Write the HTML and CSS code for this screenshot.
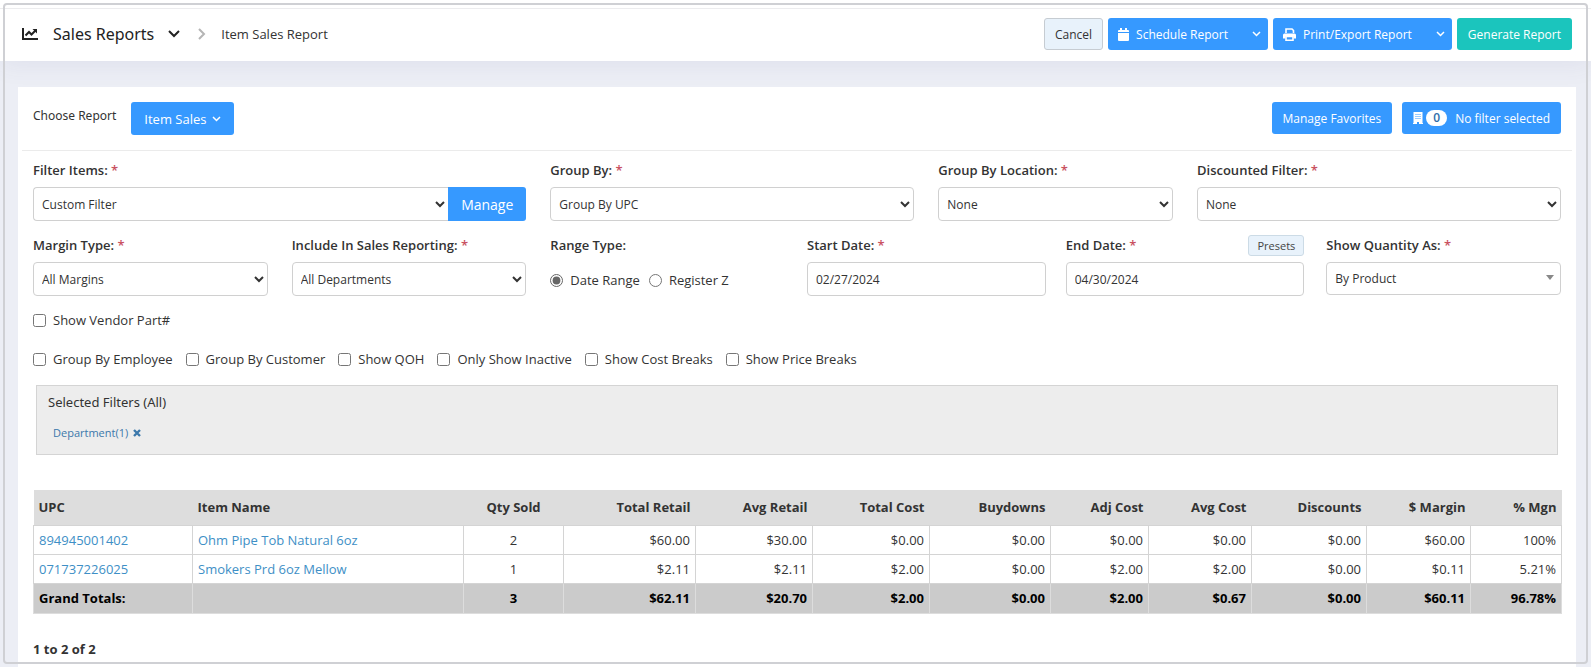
FILE: index.html
```html
<!DOCTYPE html>
<html lang="en">
<head>
    <meta charset="utf-8">
    <title>Item Sales Report</title>
    <link rel="stylesheet" href="styles.css">
</head>
<body>
  <header class="topbar">
      <svg class="icon-chart" viewBox="0 0 16 12" width="16" height="12">
        <path d="M1 0v11h15" fill="none" stroke="#222" stroke-width="2"/>
        <path d="M3.500 7.500L7 4l2.500 2.500L13.500 2.500" fill="none" stroke="#222" stroke-width="2"/>
        <path d="M10.500 1H15v4.500z" fill="#222"/>
      </svg>
      <h1 class="title">Sales Reports</h1>
      <svg class="icon-down" viewBox="0 0 12 8" width="12" height="8">
        <path d="M1 1l5 5 5-5" fill="none" stroke="#222" stroke-width="2"/>
      </svg>
      <svg class="icon-right" viewBox="0 0 8 12" width="8" height="12">
        <path d="M1 1l5 5-5 5" fill="none" stroke="#b5b5b5" stroke-width="2"/>
      </svg>
      <span class="crumb">Item Sales Report</span>
      <div class="actions">
        <button class="btn btn-light">Cancel</button>
        <div class="btn-group">
          <button class="btn">
            <svg viewBox="0 0 11 13" width="11" height="13">
              <path d="M2 0h2v2h3V0h2v2h1a1 1 0 0 1 1 1v1H0V3a1 1 0 0 1 1-1h1zM0 5h11v7a1 1 0 0 1-1 1H1a1 1 0 0 1-1-1z" fill="#fff"/>
            </svg>
            Schedule Report
          </button>
          <button class="btn btn-caret" aria-label="Schedule options">
            <svg viewBox="0 0 9 6" width="9" height="6"><path d="M1 1l3.500 3.500L8 1" fill="none" stroke="#fff" stroke-width="1.500"/></svg>
          </button>
        </div>
        <div class="btn-group">
          <button class="btn">
            <svg viewBox="0 0 13 13" width="13" height="13">
              <path d="M3 5V1h6l1.500 1.500V5" fill="none" stroke="#fff" stroke-width="1.600"/>
              <path d="M1.500 5.500h10A1.500 1.500 0 0 1 13 7v3.500h-2.500V8.500h-8v2H0V7a1.500 1.500 0 0 1 1.500-1.500z" fill="#fff"/>
              <path d="M3 8.500h7v3.700H3z" fill="none" stroke="#fff" stroke-width="1.600"/>
            </svg>
            Print/Export Report
          </button>
          <button class="btn btn-caret" aria-label="Export options">
            <svg viewBox="0 0 9 6" width="9" height="6"><path d="M1 1l3.500 3.500L8 1" fill="none" stroke="#fff" stroke-width="1.500"/></svg>
          </button>
        </div>
        <button class="btn btn-green">Generate Report</button>
      </div>
  </header>

  <main class="card">
    <div class="choose">
      <span class="choose-label">Choose Report</span>
      <button class="btn btn-report">Item Sales
        <svg viewBox="0 0 9 6" width="9" height="6"><path d="M1 1l3.500 3.500L8 1" fill="none" stroke="#fff" stroke-width="1.500"/></svg>
      </button>
      <div class="choose-right">
        <button class="btn">Manage Favorites</button>
        <button class="btn btn-filter">
          <svg viewBox="0 0 10 12" width="10" height="12">
            <path d="M.5 0h9v11h.5v1H6v-2H4v2H0v-1h.5z" fill="#fff"/>
            <path d="M2.500 2.500h1M4.500 2.500h1M6.500 2.500h1M2.500 4.500h1M4.500 4.500h1M6.500 4.500h1M2.500 6.500h1M4.500 6.500h1M6.500 6.500h1" stroke="#3699ff"/>
          </svg>
          <span class="count">0</span>
          No filter selected
        </button>
      </div>
    </div>

    <div class="filters">
      <div class="field span4">
        <label for="filter-items">Filter Items: <i>*</i></label>
        <div class="input-group">
          <select id="filter-items"><option>Custom Filter</option></select>
          <button class="btn btn-manage">Manage</button>
        </div>
      </div>
      <div class="field span3">
        <label for="group-by">Group By: <i>*</i></label>
        <select id="group-by"><option>Group By UPC</option></select>
      </div>
      <div class="field span2">
        <label for="group-location">Group By Location: <i>*</i></label>
        <select id="group-location"><option>None</option></select>
      </div>
      <div class="field span3">
        <label for="discounted">Discounted Filter: <i>*</i></label>
        <select id="discounted"><option>None</option></select>
      </div>

      <div class="field span2">
        <label for="margin-type">Margin Type: <i>*</i></label>
        <select id="margin-type"><option>All Margins</option></select>
      </div>
      <div class="field span2">
        <label for="include">Include In Sales Reporting: <i>*</i></label>
        <select id="include"><option>All Departments</option></select>
      </div>
      <div class="field span2">
        <span class="label">Range Type:</span>
        <div class="radios">
          <label class="check"><input type="radio" name="range" checked>Date Range</label>
          <label class="check"><input type="radio" name="range">Register Z</label>
        </div>
      </div>
      <div class="dates span4">
        <div class="field">
          <label for="start-date">Start Date: <i>*</i></label>
          <input id="start-date" type="text" value="02/27/2024">
        </div>
        <div class="field">
          <div class="label-row">
            <label for="end-date">End Date: <i>*</i></label>
            <button class="btn-presets">Presets</button>
          </div>
          <input id="end-date" type="text" value="04/30/2024">
        </div>
      </div>
      <div class="field span2">
        <label for="quantity">Show Quantity As: <i>*</i></label>
        <div class="quantity">
          <select id="quantity"><option>By Product</option></select>
        </div>
      </div>
    </div>

    <div class="checks">
      <label class="check"><input type="checkbox">Show Vendor Part#</label>
    </div>
    <div class="checks">
      <label class="check"><input type="checkbox">Group By Employee</label>
      <label class="check"><input type="checkbox">Group By Customer</label>
      <label class="check"><input type="checkbox">Show QOH</label>
      <label class="check"><input type="checkbox">Only Show Inactive</label>
      <label class="check"><input type="checkbox">Show Cost Breaks</label>
      <label class="check"><input type="checkbox">Show Price Breaks</label>
    </div>

    <div class="selected">
      <div class="selected-title">Selected Filters (All)</div>
      <a class="tag" href="#">Department(1)
        <svg viewBox="0 0 8 8" width="8" height="8"><path d="M1 1l6 6M7 1L1 7" stroke="#3c78ab" stroke-width="2.400"/></svg>
      </a>
    </div>

    <table class="report">
      <colgroup>
        <col class="w-upc"><col class="w-name"><col class="w-qty"><col class="w-retail"><col class="w-avg"><col class="w-cost">
        <col class="w-buy"><col class="w-adj"><col class="w-avgcost"><col class="w-disc"><col class="w-margin"><col class="w-mgn">
      </colgroup>
      <thead>
        <tr>
          <th>UPC</th><th>Item Name</th><th>Qty Sold</th><th>Total Retail</th><th>Avg Retail</th><th>Total Cost</th>
          <th>Buydowns</th><th>Adj Cost</th><th>Avg Cost</th><th>Discounts</th><th>$ Margin</th><th>% Mgn</th>
        </tr>
      </thead>
      <tbody>
        <tr>
          <td><a href="#">894945001402</a></td><td><a href="#">Ohm Pipe Tob Natural 6oz</a></td><td>2</td><td>$60.00</td><td>$30.00</td><td>$0.00</td>
          <td>$0.00</td><td>$0.00</td><td>$0.00</td><td>$0.00</td><td>$60.00</td><td>100%</td>
        </tr>
        <tr>
          <td><a href="#">071737226025</a></td><td><a href="#">Smokers Prd 6oz Mellow</a></td><td>1</td><td>$2.11</td><td>$2.11</td><td>$2.00</td>
          <td>$0.00</td><td>$2.00</td><td>$2.00</td><td>$0.00</td><td>$0.11</td><td>5.21%</td>
        </tr>
      </tbody>
      <tfoot>
        <tr>
          <td>Grand Totals:</td><td></td><td>3</td><td>$62.11</td><td>$20.70</td><td>$2.00</td>
          <td>$0.00</td><td>$2.00</td><td>$0.67</td><td>$0.00</td><td>$60.11</td><td>96.78%</td>
        </tr>
      </tfoot>
    </table>
    <p class="pager">1 to 2 of 2</p>
  </main>
</body>
</html>
```
FILE: styles.css
```css
*{
    box-sizing: border-box;
}
body{
    margin: 0;
    min-height: 100vh;
    display: flex;
    flex-direction: column;
    background: #eceef5;
    color: #333;
    font: 13px/20px "Open Sans", sans-serif;
}
/* rounded frame drawn over the whole window */
body::after{
    content: "";
    position: fixed;
    inset: 3px;
    border: 2px solid #cfd0d4;
    border-radius: 4px;
    pointer-events: none;
}
button, select, input{
    font-family: inherit;
    color: inherit;
}

/* top bar */
.topbar{
    display: flex;
    align-items: center;
    height: 53px;
    margin-top: 8px;
    padding: 0 19px 2px 22px;
    border-top: 1px solid #ececee;
    background: #fff;
    box-shadow: 0 -8px 0 #fff, 0 4px 24px rgba(80, 80, 140, .08);
}
.title{
    margin: 0 14px 0 15px;
    font: 400 16px/20px "Noto Sans", sans-serif;
    color: #222;
}
.icon-right{
    margin: 0 15px 0 18px;
}
.actions{
    display: flex;
    gap: 5px;
    margin-left: auto;
}
.btn-group{
    display: flex;
}
.btn-group .btn:first-child{
    border-radius: 3px 0 0 3px;
}
.btn{
    display: flex;
    align-items: center;
    gap: 7px;
    height: 32px;
    padding: 0 11px;
    border: 0;
    border-radius: 3px;
    background: #3699ff;
    color: #fff;
    font-size: 12px;
    white-space: nowrap;
}
.btn-group .btn:first-child{
    padding: 0 10px;
}
.btn-group .btn-caret{
    padding: 0 7px 0 14px;
    border-radius: 0 3px 3px 0;
}
.btn-light{
    border: 1px solid #c6ccd2;
    background: #e8f2fb;
    color: #333;
    padding: 0 10px;
}
.btn-green{
    background: #1bc5bd;
}

/* card */
.card{
    flex: 1;
    margin: 26px 15px 0 18px;
    padding: 0 15px 5px;
    background: #fff;
}
.choose{
    display: flex;
    height: 64px;
    margin: 0 -11px 9px;
    padding: 15px 11px 0;
    border-bottom: 1px solid #ebebeb;
}
.choose-label{
    margin: 4px 15px 0 0;
    font-family: "Noto Sans", sans-serif;
    font-size: 12px;
}
.btn-report{
    height: 33px;
    padding: 0 13px;
    font-size: 13px;
    gap: 6px;
}
.choose-right{
    display: flex;
    gap: 10px;
    margin-left: auto;
}
.btn-filter{
    gap: 3px;
}
.count{
    width: 21px;
    margin-right: 5px;
    border-radius: 8px;
    background: #fff;
    color: #2f6ca8;
    font-weight: 600;
    line-height: 16px;
}

.filters{
    display: grid;
    grid-template-columns: repeat(12, 1fr);
    gap: 14px 24px;
}
.span2{ grid-column: span 2; }
.span3{ grid-column: span 3; }
.span4{ grid-column: span 4; }
.field > label, .label, .label-row{
    display: block;
    height: 20px;
    margin-bottom: 7px;
    font-weight: 600;
}
.field i{
    color: #c9515f;
    font-style: normal;
}
.filters select, .filters input[type=text]{
    display: block;
    width: 100%;
    height: 34px;
    padding: 0 8px;
    border: 1px solid #d0d0d0;
    border-radius: 4px;
    background-color: #fff;
    font-size: 12px;
}
.filters select{
    padding: 0 0 0 4px;
}
.input-group{
    display: flex;
}
.input-group select{
    border-right: 0;
    border-radius: 4px 0 0 4px;
}
.btn-manage{
    height: 34px;
    padding: 0 13px;
    border-radius: 0 3px 3px 0;
    font-size: 14px;
}
.dates{
    display: grid;
    grid-template-columns: 1fr 1fr;
    gap: 20px;
    margin: 0 -2px;
}
.label-row{
    display: flex;
    justify-content: space-between;
}
.btn-presets{
    height: 21px;
    padding: 0 8px;
    border: 1px solid #ccdbe6;
    border-radius: 3px;
    background: #e8f2fb;
    color: #444;
    font-size: 11px;
    line-height: 19px;
}
.quantity{
    position: relative;
}
.filters .quantity select{
    appearance: none;
    height: 33px;
    padding-left: 8px;
}
.quantity::after{
    content: "";
    position: absolute;
    right: 7px;
    top: 13px;
    border: 4px solid transparent;
    border-top: 5px solid #888;
    border-bottom: 0;
}
.check{
    display: flex;
    align-items: center;
    gap: 7px;
    font-weight: 400;
}
.check input{
    width: 13px;
    height: 13px;
    margin: 0;
    accent-color: #666;
}
.radios{
    display: flex;
    gap: 9px;
    padding-top: 8px;
}
.checks{
    display: flex;
    gap: 13px;
    margin: 14px 0 19px;
}
.checks + .checks{
    margin-bottom: 16px;
}

.selected{
    height: 70px;
    margin: 0 3px 35px;
    padding: 6px 11px;
    border: 1px solid #d4d4d4;
    background: #ededed;
}
.selected-title{
    margin-bottom: 11px;
    font-family: "Noto Sans", sans-serif;
}
.tag{
    display: flex;
    align-items: center;
    gap: 5px;
    margin-left: 5px;
    color: #3c78ab;
    font-size: 11px;
    text-decoration: none;
}

/* report table */
.report{
    width: 100%;
    table-layout: fixed;
    border-collapse: collapse;
}
.w-upc{ width: 159px; }
.w-name{ width: 271px; }
.w-qty{ width: 100px; }
.w-retail{ width: 132px; }
.w-avg, .w-cost{ width: 117px; }
.w-buy{ width: 121px; }
.w-adj{ width: 98px; }
.w-avgcost{ width: 103px; }
.w-disc{ width: 115px; }
.w-margin{ width: 104px; }
.w-mgn{ width: 91px; }
.report th, .report td{
    padding: 4px 5px;
    text-align: right;
}
.report th{
    height: 35px;
    background: #ddd;
    font-weight: 700;
}
.report td{
    border: 1px solid #d4d4d4;
}
.report th:nth-child(-n+2), .report td:nth-child(-n+2){
    text-align: left;
}
.report th:nth-child(3), .report td:nth-child(3){
    text-align: center;
}
.report a{
    color: #3e8fc6;
    text-decoration: none;
}
.report tfoot td{
    height: 30px;
    background: #cbcbcb;
    border-color: #ddd;
    color: #000;
    font-weight: 700;
}
.pager{
    margin: 25px 0 0;
    font-weight: 700;
}
```
